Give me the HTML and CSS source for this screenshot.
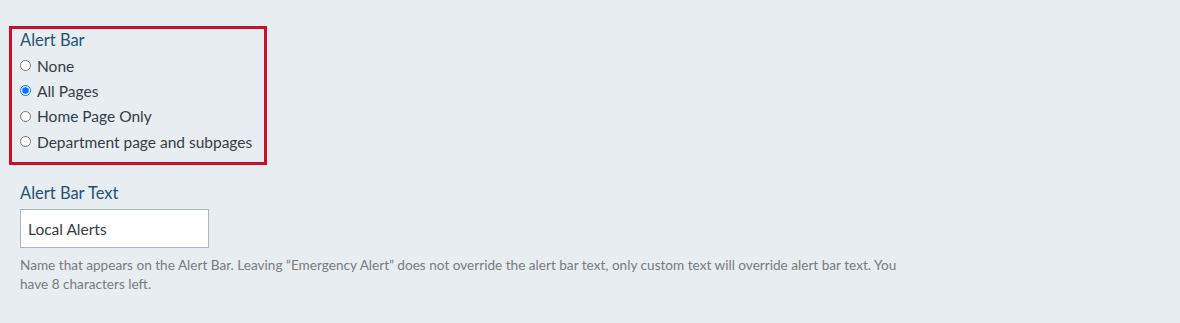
FILE: index.html
```html
<!DOCTYPE html>
<html lang="en">
<head>
<meta charset="utf-8">
<title>Alert Bar</title>
<link rel="stylesheet" href="styles.css">
</head>
<body>
<div class="page">
  <fieldset class="alert-box">
    <div class="field-label">Alert Bar</div>
    <label class="option"><input type="radio" name="alertbar"><span>None</span></label>
    <label class="option"><input type="radio" name="alertbar" checked><span>All Pages</span></label>
    <label class="option"><input type="radio" name="alertbar"><span>Home Page Only</span></label>
    <label class="option"><input type="radio" name="alertbar"><span>Department page and subpages</span></label>
  </fieldset>
  <div class="text-field">
    <label class="field-label" for="abt">Alert Bar Text</label>
    <input id="abt" class="text-input" type="text" value="Local Alerts">
    <p class="help">Name that appears on the Alert Bar. Leaving “Emergency Alert” does not override the alert bar text, only custom text will override alert bar text. You have 8 characters left.</p>
  </div>
</div>
</body>
</html>
```

FILE: styles.css
```css
html, body {
  margin: 0;
  padding: 0;
  background: #e8edf1;
}
body {
  font-family: Lato, "Open Sans", sans-serif;
  color: #333d47;
}
.page {
  padding: 26px 0 0 9px;
}
.alert-box {
  margin: 0;
  border: 3px solid #c8102e;
  box-sizing: border-box;
  width: 258px;
  height: 139px;
  padding: 1px 0 0 8px;
  display: flex;
  flex-direction: column;
}
.field-label {
  display: block;
  font-size: 16.5px;
  line-height: 20px;
  color: #1f5477;
}
.alert-box .field-label {
  margin-bottom: 3px;
}
.option {
  display: flex;
  align-items: center;
  height: 25.3px;
  font-size: 15.5px;
  color: #333d47;
}
.option input {
  margin: 0 6px 0 0;
  width: 11px;
  height: 11px;
}
.text-field {
  padding: 18px 0 0 11px;
}
.text-input {
  display: block;
  box-sizing: border-box;
  width: 189px;
  height: 39px;
  margin: 6px 0 0;
  border: 1px solid #a8b6c6;
  background: #fff;
  padding: 0 7px;
  font-family: inherit;
  font-size: 15.5px;
  color: #333d47;
}
.help {
  margin: 8px 0 0;
  width: 905px;
  font-size: 13.6px;
  line-height: 19px;
  color: #777c80;
}
```
